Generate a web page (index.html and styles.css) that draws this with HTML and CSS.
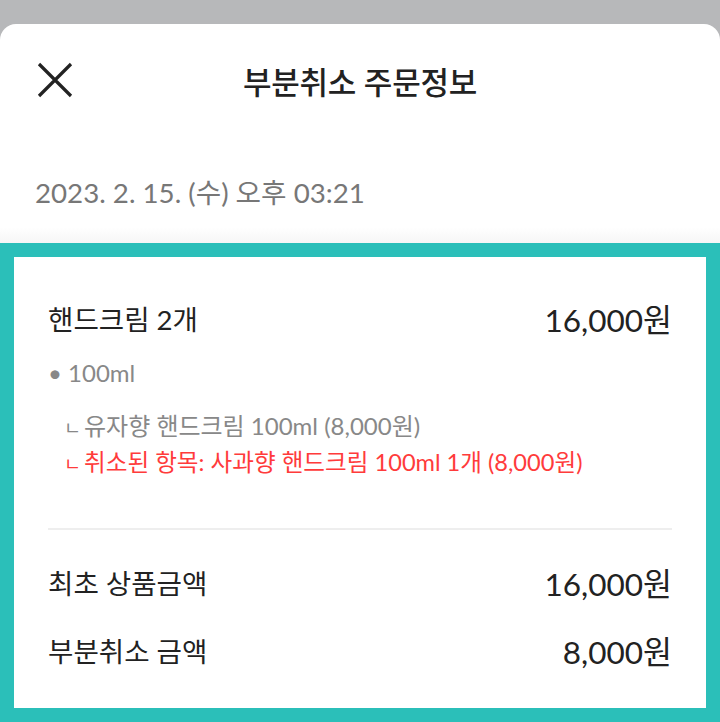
FILE: index.html
```html
<!DOCTYPE html>
<html lang="ko">
<head>
  <meta charset="UTF-8" />
  <meta name="viewport" content="width=device-width, initial-scale=1.0" />
  <title>부분취소 주문정보</title>
  <link rel="stylesheet" href="styles.css">
</head>
<body>

<div class="sheet">
  <header class="top-bar">
    <button class="close-btn" aria-label="닫기">
      <svg width="36" height="36" viewBox="0 0 36 36">
        <path d="M2 2 L34 34 M34 2 L2 34" stroke="#222" stroke-width="3.2" fill="none" />
      </svg>
    </button>
    <h1>부분취소 주문정보</h1>
  </header>

  <p class="order-date">2023. 2. 15. (수) 오후 03:21</p>

  <main class="order-box">
    <div class="order-inner">
      <div class="row product">
        <span>핸드크림 2개</span>
        <span class="price">16,000원</span>
      </div>
      <p class="option">• 100ml</p>
      <p class="sub-item"><span class="corner">ㄴ</span>유자향 핸드크림 100ml (8,000원)</p>
      <p class="sub-item cancelled"><span class="corner">ㄴ</span>취소된 항목: 사과향 핸드크림 100ml 1개 (8,000원)</p>

      <hr class="divider">

      <div class="row total">
        <span>최초 상품금액</span>
        <span class="price">16,000원</span>
      </div>
      <div class="row total">
        <span>부분취소 금액</span>
        <span class="price">8,000원</span>
      </div>
    </div>
  </main>
</div>

</body>
</html>
```

FILE: styles.css
```css
* {box-sizing: border-box;}
html, body {height: 100%;}
body {
  margin: 0;
  background-color: #b7b8ba;
  font-family: Lato, "Noto Sans CJK KR", sans-serif;
  color: #222;
}
.sheet {
  margin-top: 24px;
  height: 698px;
  background-color: #fff;
  border-radius: 16px 16px 0 0;
  display: flex;
  flex-direction: column;
  overflow: hidden;
}
.top-bar {
  position: relative;
  height: 112px;
  display: flex;
  align-items: center;
  justify-content: center;
}
.top-bar h1 {
  margin: 0;
  font-size: 31px;
  font-weight: 500;
  letter-spacing: -0.2px;
}
.close-btn {
  position: absolute;
  left: 37px;
  top: 38px;
  padding: 0;
  border: none;
  background: none;
  display: block;
}
.close-btn svg {display: block;}
.order-date {
  margin: 0;
  height: 107px;
  padding: 40px 0 0 35px;
  font-size: 27.7px;
  line-height: 34px;
  color: #777;
  background: linear-gradient(to bottom, #fff 85%, #f6f6f6 100%);
}
.order-box {
  flex: 1;
  border: 14px solid #2bbfb9;
}
.order-inner {
  height: 100%;
  background-color: #fff;
  padding: 45px 34px 0 34px;
}
.row {
  display: flex;
  justify-content: space-between;
  align-items: center;
  font-size: 27.6px;
  line-height: 36px;
}
.price {
  font-size: 31.5px;
}
.option {
  margin: 20px 0 0 0;
  font-size: 24px;
  line-height: 30px;
  color: #888;
}
.sub-item {
  margin: 22px 0 0 16px;
  font-size: 24px;
  line-height: 32px;
  color: #888;
}
.sub-item.cancelled {
  margin-top: 2px;
  font-size: 23.6px;
  color: #ff3b3b;
}
.corner {
  display: inline-block;
  width: 20px;
  font-size: 18.5px;
}
.divider {
  margin: 48px 0 0 0;
  border: none;
  border-top: 2px solid #eee;
}
.total {
  margin-top: 36px;
}
.total + .total {
  margin-top: 32px;
}
```
